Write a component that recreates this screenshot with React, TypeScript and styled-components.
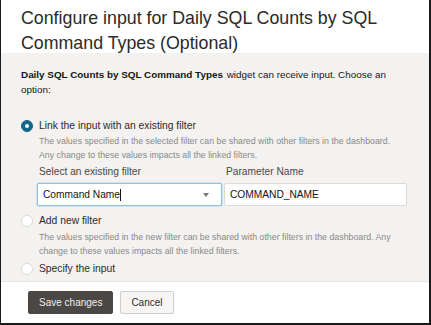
import React from "react";
import styled, { createGlobalStyle } from "styled-components";

const Global = createGlobalStyle`
  html, body { margin: 0; padding: 0; background: #fff; }
  body { font-family: "Liberation Sans", Arial, sans-serif; color: #161513; }
  * { box-sizing: border-box; }
`;

const Frame = styled.div`
  width: 431px;
  height: 325px;
  border-left: 1px solid #1a1a1a;
  border-right: 2px solid #1a1a1a;
  border-bottom: 2px solid #1a1a1a;
  display: flex;
  flex-direction: column;
  overflow: hidden;
`;

const Header = styled.div`
  background: #fff;
  padding: 6px 20px 4px 20px;
  height: 53px;
`;

const Title = styled.h1`
  margin: 0;
  font-size: 17.8px;
  line-height: 25px;
  font-weight: 400;
  color: #2b2a28;
`;

const Body = styled.div`
  flex: 1;
  background: #f3f2f0;
  padding: 14px 20px 0 20px;
`;

const Intro = styled.p`
  margin: 0 0 21px 0;
  font-size: 9.9px;
  line-height: 15px;
  color: #161513;
`;

const Strong = styled.b`
  font-weight: 700;
  margin-right: 1px;
`;

const Option = styled.div<{ $gap?: number }>`
  display: flex;
  flex-direction: column;
  margin-top: ${(p) => p.$gap ?? 0}px;
`;

const OptionRow = styled.label`
  display: flex;
  align-items: center;
  gap: 6px;
  font-size: 10.3px;
  line-height: 16px;
  color: #2b2a28;
`;

const Radio = styled.span<{ $checked?: boolean }>`
  width: 12px;
  height: 12px;
  border-radius: 50%;
  flex: none;
  display: flex;
  align-items: center;
  justify-content: center;
  background: ${(p) => (p.$checked ? "#12668a" : "#fff")};
  border: 1px solid ${(p) => (p.$checked ? "#12668a" : "#dcdad6")};
  &::after {
    content: "";
    width: 4px;
    height: 4px;
    border-radius: 50%;
    background: #fff;
    display: ${(p) => (p.$checked ? "block" : "none")};
  }
`;

const Desc = styled.div<{ $top?: number }>`
  padding-left: 18px;
  font-size: 8.8px;
  line-height: 13.5px;
  color: #8a8886;
  margin-top: ${(p) => p.$top ?? 0}px;
`;

const Fields = styled.div`
  display: grid;
  grid-template-columns: 185px 183px;
  column-gap: 2px;
  padding-left: 16px;
  margin-top: 3px;
`;

const FieldLabel = styled.div`
  font-size: 10.2px;
  line-height: 14px;
  color: #4a4845;
  padding-left: 2px;
  margin-bottom: 4px;
`;

const Box = styled.div<{ $focus?: boolean }>`
  height: 23px;
  background: #fff;
  border: 1px solid ${(p) => (p.$focus ? "#8fc3e0" : "#dcdad6")};
  box-shadow: ${(p) => (p.$focus ? "0 0 0 0.5px #a9d1e8" : "none")};
  border-radius: 2px;
  display: flex;
  align-items: center;
  padding: 0 8px 0 5px;
  font-size: 10.2px;
  color: #161513;
`;

const Caret = styled.span`
  display: inline-block;
  width: 1px;
  height: 12px;
  background: #161513;
`;

const Arrow = styled.span`
  margin-left: auto;
  width: 0;
  height: 0;
  border-left: 3px solid transparent;
  border-right: 3px solid transparent;
  border-top: 4px solid #7a7875;
  margin-right: 4px;
`;

const Footer = styled.div`
  height: 42px;
  background: #fff;
  border-top: 1px solid #e8e6e3;
  display: flex;
  align-items: center;
  gap: 7px;
  padding: 0 0 0 27px;
`;

const Button = styled.button<{ $primary?: boolean }>`
  height: 23px;
  padding: 0 10px;
  font-family: "Liberation Sans", Arial, sans-serif;
  font-size: 10px;
  border-radius: 2px;
  border: 1px solid ${(p) => (p.$primary ? "#4a4744" : "#cfcdc9")};
  background: ${(p) => (p.$primary ? "#4a4744" : "#f6f5f3")};
  color: ${(p) => (p.$primary ? "#f0efed" : "#2b2a28")};
`;

export default function App() {
  return (
    <>
      <Global />
      <Frame>
        <Header>
          <Title>Configure input for Daily SQL Counts by SQL Command Types (Optional)</Title>
        </Header>
        <Body>
          <Intro>
            <Strong>Daily SQL Counts by SQL Command Types</Strong> widget can receive input. Choose an option:
          </Intro>
          <Option>
            <OptionRow>
              <Radio $checked />
              Link the input with an existing filter
            </OptionRow>
            <Desc $top={1}>
              The values specified in the selected filter can be shared with other filters in the dashboard.
              <br />
              Any change to these values impacts all the linked filters.
            </Desc>
            <Fields>
              <div>
                <FieldLabel>Select an existing filter</FieldLabel>
                <Box $focus>
                  Command Name
                  <Caret />
                  <Arrow />
                </Box>
              </div>
              <div>
                <FieldLabel>Parameter Name</FieldLabel>
                <Box>COMMAND_NAME</Box>
              </div>
            </Fields>
          </Option>
          <Option $gap={7}>
            <OptionRow>
              <Radio />
              Add new filter
            </OptionRow>
            <Desc $top={2}>
              The values specified in the new filter can be shared with other filters in the dashboard. Any
              <br />
              change to these values impacts all the linked filters.
            </Desc>
          </Option>
          <Option $gap={3}>
            <OptionRow>
              <Radio />
              Specify the input
            </OptionRow>
          </Option>
        </Body>
        <Footer>
          <Button $primary>Save changes</Button>
          <Button>Cancel</Button>
        </Footer>
      </Frame>
    </>
  );
}
